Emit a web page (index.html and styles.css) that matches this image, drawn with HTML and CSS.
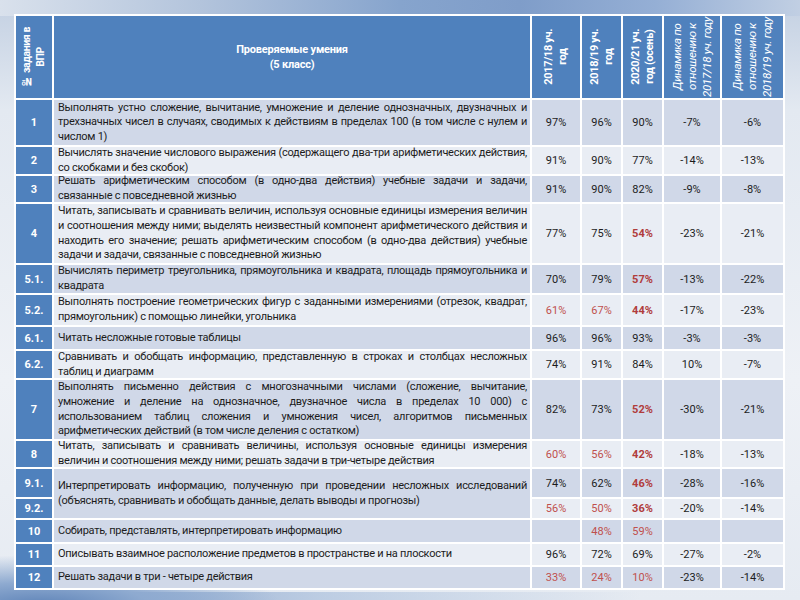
FILE: index.html
```html
<!DOCTYPE html>
<html lang="ru">
<head>
<meta charset="utf-8">
<title>ВПР 5 класс</title>
<link rel="stylesheet" href="styles.css">
</head>
<body>
<div class="slide">
  <div class="grid">
    <div class="h hv"><span class="vt narrow">№ задания в<br>ВПР</span></div>
    <div class="h hmain">Проверяемые умения<br>(5 класс)</div>
    <div class="h hv"><span class="vt">2017/18 уч.<br>год</span></div>
    <div class="h hv"><span class="vt">2018/19 уч.<br>год</span></div>
    <div class="h hv"><span class="vt">2020/21 уч.<br>год (осень)</span></div>
    <div class="h hv"><span class="vt it">Динамика по<br>отношению к<br>2017/18 уч. году</span></div>
    <div class="h hv"><span class="vt it">Динамика по<br>отношению к<br>2018/19 уч. году</span></div>

    <div class="num">1</div>
    <div class="txt d"><p><span class="ln">Выполнять устно сложение, вычитание, умножение и деление однозначных, двузначных и</span><span class="ln">трехзначных чисел в случаях, сводимых к действиям в пределах 100 (в том числе с нулем и</span><span class="last">числом 1)</span></p></div>
    <div class="val d">97%</div><div class="val d">96%</div><div class="val d">90%</div><div class="val d">-7%</div><div class="val d">-6%</div>

    <div class="num">2</div>
    <div class="txt l"><p><span class="ln">Вычислять значение числового выражения (содержащего два-три арифметических действия,</span><span class="last">со скобками и без скобок)</span></p></div>
    <div class="val l">91%</div><div class="val l">90%</div><div class="val l">77%</div><div class="val l">-14%</div><div class="val l">-13%</div>

    <div class="num">3</div>
    <div class="txt d"><p><span class="ln">Решать арифметическим способом (в одно-два действия) учебные задачи и задачи,</span><span class="last">связанные с повседневной жизнью</span></p></div>
    <div class="val d">91%</div><div class="val d">90%</div><div class="val d">82%</div><div class="val d">-9%</div><div class="val d">-8%</div>

    <div class="num">4</div>
    <div class="txt l"><p><span class="ln">Читать, записывать и сравнивать величин, используя основные единицы измерения величин</span><span class="ln">и соотношения между ними; выделять неизвестный компонент арифметического действия и</span><span class="ln">находить его значение; решать арифметическим способом (в одно-два действия) учебные</span><span class="last">задачи и задачи, связанные с повседневной жизнью</span></p></div>
    <div class="val l">77%</div><div class="val l">75%</div><div class="val l rb">54%</div><div class="val l">-23%</div><div class="val l">-21%</div>

    <div class="num">5.1.</div>
    <div class="txt d"><p><span class="ln">Вычислять периметр треугольника, прямоугольника и квадрата, площадь прямоугольника и</span><span class="last">квадрата</span></p></div>
    <div class="val d">70%</div><div class="val d">79%</div><div class="val d rb">57%</div><div class="val d">-13%</div><div class="val d">-22%</div>

    <div class="num">5.2.</div>
    <div class="txt l"><p><span class="ln">Выполнять построение геометрических фигур с заданными измерениями (отрезок, квадрат,</span><span class="last">прямоугольник) с помощью линейки, угольника</span></p></div>
    <div class="val l r">61%</div><div class="val l r">67%</div><div class="val l rb">44%</div><div class="val l">-17%</div><div class="val l">-23%</div>

    <div class="num">6.1.</div>
    <div class="txt d"><p><span class="last">Читать несложные готовые таблицы</span></p></div>
    <div class="val d">96%</div><div class="val d">96%</div><div class="val d">93%</div><div class="val d">-3%</div><div class="val d">-3%</div>

    <div class="num">6.2.</div>
    <div class="txt l"><p><span class="ln">Сравнивать и обобщать информацию, представленную в строках и столбцах несложных</span><span class="last">таблиц и диаграмм</span></p></div>
    <div class="val l">74%</div><div class="val l">91%</div><div class="val l">84%</div><div class="val l">10%</div><div class="val l">-7%</div>

    <div class="num">7</div>
    <div class="txt d"><p><span class="ln">Выполнять письменно действия с многозначными числами (сложение, вычитание,</span><span class="ln">умножение и деление на однозначное, двузначное числа в пределах 10 000) с</span><span class="ln">использованием таблиц сложения и умножения чисел, алгоритмов письменных</span><span class="last">арифметических действий (в том числе деления с остатком)</span></p></div>
    <div class="val d">82%</div><div class="val d">73%</div><div class="val d rb">52%</div><div class="val d">-30%</div><div class="val d">-21%</div>

    <div class="num">8</div>
    <div class="txt l"><p><span class="ln">Читать, записывать и сравнивать величины, используя основные единицы измерения</span><span class="last">величин и соотношения между ними; решать задачи в три-четыре действия</span></p></div>
    <div class="val l r">60%</div><div class="val l r">56%</div><div class="val l rb">42%</div><div class="val l">-18%</div><div class="val l">-13%</div>

    <div class="num">9.1.</div>
    <div class="txt d span2"><p><span class="ln">Интерпретировать информацию, полученную при проведении несложных исследований</span><span class="last">(объяснять, сравнивать и обобщать данные, делать выводы и прогнозы)</span></p></div>
    <div class="val d">74%</div><div class="val d">62%</div><div class="val d rb">46%</div><div class="val d">-28%</div><div class="val d">-16%</div>

    <div class="num">9.2.</div>
    <div class="val l r">56%</div><div class="val l r">50%</div><div class="val l rb">36%</div><div class="val l">-20%</div><div class="val l">-14%</div>

    <div class="num">10</div>
    <div class="txt d"><p><span class="last">Собирать, представлять, интерпретировать информацию</span></p></div>
    <div class="val d"></div><div class="val d r">48%</div><div class="val d r">59%</div><div class="val d"></div><div class="val d"></div>

    <div class="num">11</div>
    <div class="txt l"><p><span class="last">Описывать взаимное расположение предметов в пространстве и на плоскости</span></p></div>
    <div class="val l">96%</div><div class="val l">72%</div><div class="val l">69%</div><div class="val l">-27%</div><div class="val l">-2%</div>

    <div class="num">12</div>
    <div class="txt d"><p><span class="last">Решать задачи в три - четыре действия</span></p></div>
    <div class="val d r">33%</div><div class="val d r">24%</div><div class="val d r">10%</div><div class="val d">-23%</div><div class="val d">-14%</div>
  </div>
</div>
</body>
</html>
```

FILE: styles.css
```css
html, body {
  margin: 0;
  width: 800px;
  height: 600px;
  overflow: hidden;
}

body {
  font-family: Roboto, "Liberation Sans", sans-serif;
  font-size: 11px;
  color: #1c1c1c;
  background:
    linear-gradient(to right, #d9e1ec 0%, #b3c4dc 25%, #86a4cd 50%, #7f9dc9 65%, #95afd5 82%, #c1cfe3 100%) top left / 100% 16px no-repeat,
    radial-gradient(ellipse 240px 50px at 40px 605px, #5f84b8 0%, #8eaad0 45%, rgba(214, 224, 237, 0) 100%),
    linear-gradient(to right, rgba(110, 143, 190, 0.85) 0%, rgba(160, 184, 216, 0.6) 40%, rgba(210, 222, 237, 0) 80%) bottom left / 100% 8px no-repeat,
    linear-gradient(to bottom, #c3d0e2 0px, #e3e9f1 110px, #eef1f6 380px, #e6ebf2 600px);
}

.slide {
  padding: 14px 0 0 14px;
}

.grid {
  display: inline-grid;
  grid-template-columns: 36px 476px 48px 39px 39px 56px 61px;
  grid-template-rows: 82px 45px 27px 26px 59px 28px 30px 22px 27px 59px 26px 28px 19px 22px 21px 21px;
  gap: 2px;
  padding: 2px;
  background: #ffffff;
}

.grid > div {
  display: flex;
  align-items: center;
  overflow: visible;
  min-width: 0;
}

.h {
  background: #4f81bd;
  color: #ffffff;
  font-weight: 700;
  justify-content: center;
  overflow: hidden !important;
}

.hmain {
  text-align: center;
  line-height: 15px;
  letter-spacing: -0.2px;
}

.vt {
  writing-mode: vertical-rl;
  transform: rotate(180deg);
  text-align: center;
  white-space: nowrap;
  line-height: 14px;
  letter-spacing: -0.35px;
}

.vt.narrow {
  font-size: 10.5px;
  letter-spacing: -0.4px;
}

.vt.it {
  font-style: italic;
  font-weight: 400;
  font-size: 11.5px;
  line-height: 15px;
  letter-spacing: -0.3px;
}

.num {
  background: #4f81bd;
  color: #ffffff;
  font-weight: 700;
  justify-content: center;
}

.txt {
  padding: 0 3px 0 4px;
}

.txt p {
  margin: 0;
  width: 100%;
  line-height: 14.6px;
  letter-spacing: -0.28px;
}

.ln {
  display: block;
  white-space: nowrap;
  text-align: justify;
  text-align-last: justify;
}

.last {
  display: block;
  white-space: nowrap;
  text-align: left;
}

.span2 {
  grid-row: span 2;
}

.val {
  justify-content: center;
}

.d {
  background: #d0d8e8;
}

.l {
  background: #e9edf4;
}

.r {
  color: #c0504d;
}

.rb {
  color: #b03c3c;
  font-weight: 700;
}
```
